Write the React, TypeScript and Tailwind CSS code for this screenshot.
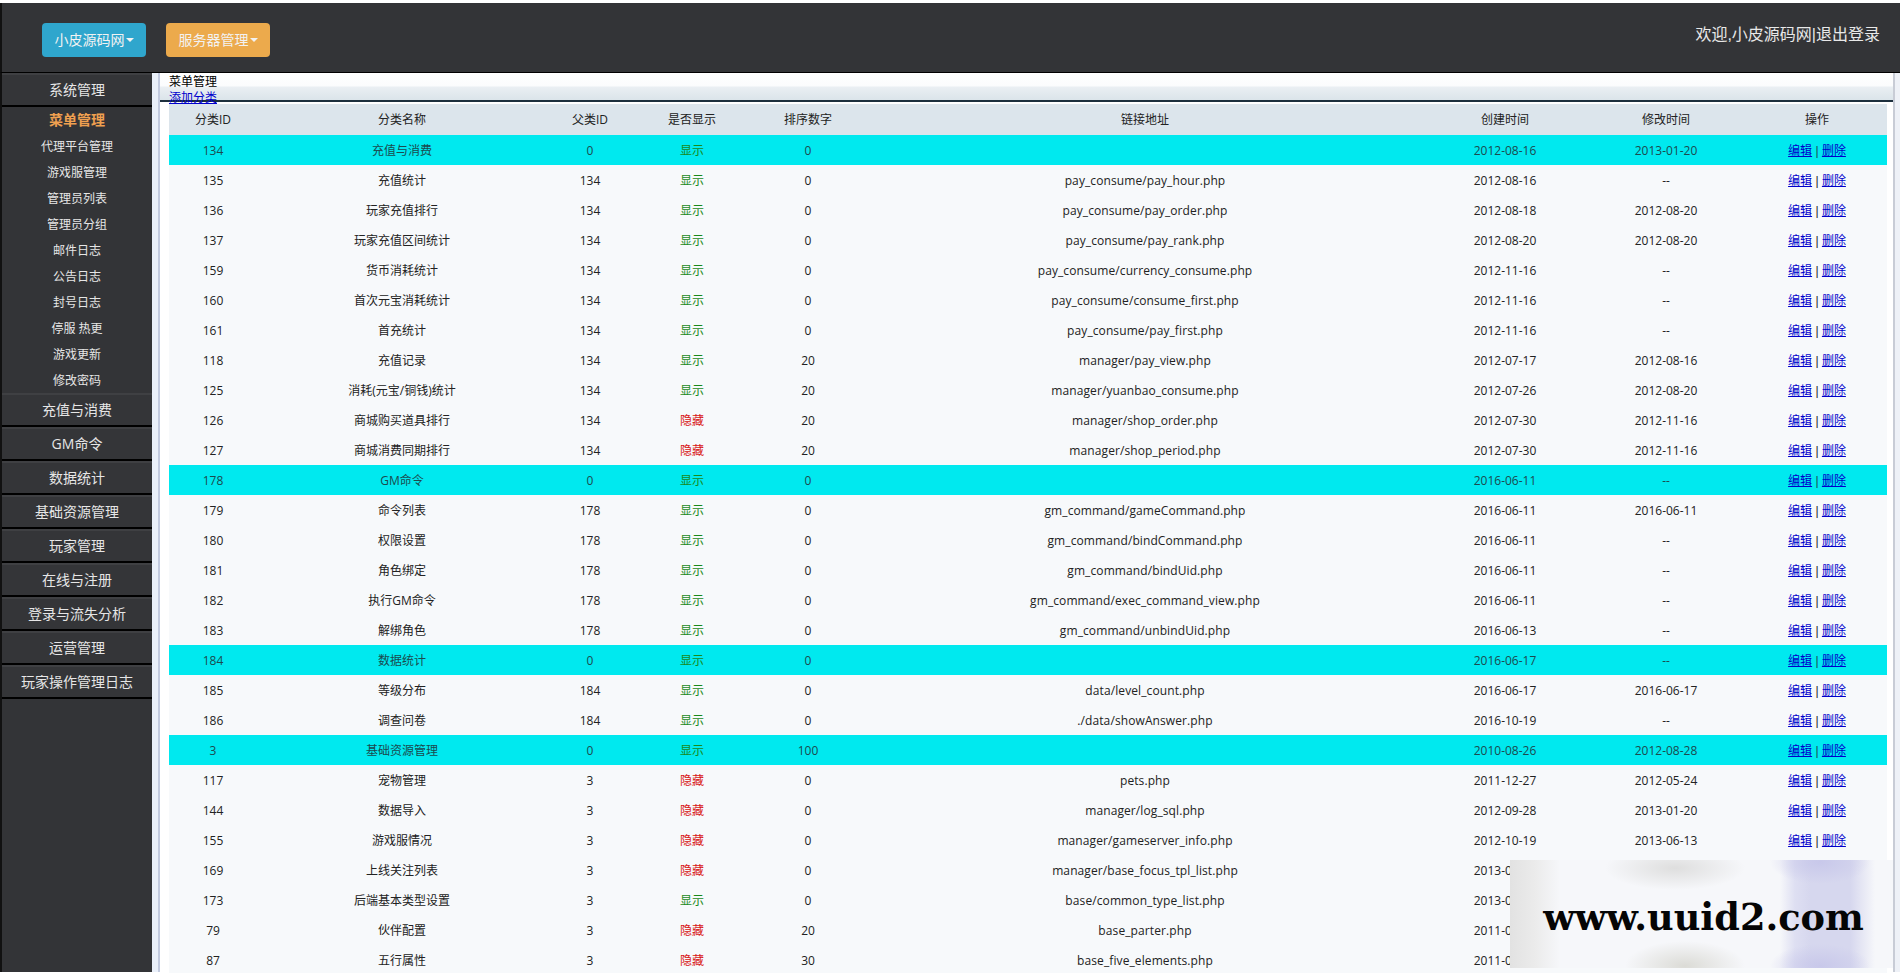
type Row = [number, string, number, boolean, number, string, string, string];

const rows: Row[] = [
  [134, "充值与消费", 0, true, 0, "", "2012-08-16", "2013-01-20"],
  [135, "充值统计", 134, true, 0, "pay_consume/pay_hour.php", "2012-08-16", "--"],
  [136, "玩家充值排行", 134, true, 0, "pay_consume/pay_order.php", "2012-08-18", "2012-08-20"],
  [137, "玩家充值区间统计", 134, true, 0, "pay_consume/pay_rank.php", "2012-08-20", "2012-08-20"],
  [159, "货币消耗统计", 134, true, 0, "pay_consume/currency_consume.php", "2012-11-16", "--"],
  [160, "首次元宝消耗统计", 134, true, 0, "pay_consume/consume_first.php", "2012-11-16", "--"],
  [161, "首充统计", 134, true, 0, "pay_consume/pay_first.php", "2012-11-16", "--"],
  [118, "充值记录", 134, true, 20, "manager/pay_view.php", "2012-07-17", "2012-08-16"],
  [125, "消耗(元宝/铜钱)统计", 134, true, 20, "manager/yuanbao_consume.php", "2012-07-26", "2012-08-20"],
  [126, "商城购买道具排行", 134, false, 20, "manager/shop_order.php", "2012-07-30", "2012-11-16"],
  [127, "商城消费同期排行", 134, false, 20, "manager/shop_period.php", "2012-07-30", "2012-11-16"],
  [178, "GM命令", 0, true, 0, "", "2016-06-11", "--"],
  [179, "命令列表", 178, true, 0, "gm_command/gameCommand.php", "2016-06-11", "2016-06-11"],
  [180, "权限设置", 178, true, 0, "gm_command/bindCommand.php", "2016-06-11", "--"],
  [181, "角色绑定", 178, true, 0, "gm_command/bindUid.php", "2016-06-11", "--"],
  [182, "执行GM命令", 178, true, 0, "gm_command/exec_command_view.php", "2016-06-11", "--"],
  [183, "解绑角色", 178, true, 0, "gm_command/unbindUid.php", "2016-06-13", "--"],
  [184, "数据统计", 0, true, 0, "", "2016-06-17", "--"],
  [185, "等级分布", 184, true, 0, "data/level_count.php", "2016-06-17", "2016-06-17"],
  [186, "调查问卷", 184, true, 0, "./data/showAnswer.php", "2016-10-19", "--"],
  [3, "基础资源管理", 0, true, 100, "", "2010-08-26", "2012-08-28"],
  [117, "宠物管理", 3, false, 0, "pets.php", "2011-12-27", "2012-05-24"],
  [144, "数据导入", 3, false, 0, "manager/log_sql.php", "2012-09-28", "2013-01-20"],
  [155, "游戏服情况", 3, false, 0, "manager/gameserver_info.php", "2012-10-19", "2013-06-13"],
  [169, "上线关注列表", 3, false, 0, "manager/base_focus_tpl_list.php", "2013-06-13", "--"],
  [173, "后端基本类型设置", 3, true, 0, "base/common_type_list.php", "2013-06-13", "--"],
  [79, "伙伴配置", 3, false, 20, "base_parter.php", "2011-08-08", "--"],
  [87, "五行属性", 3, false, 30, "base_five_elements.php", "2011-08-08", "--"],
];

const subMenu = ["代理平台管理", "游戏服管理", "管理员列表", "管理员分组", "邮件日志", "公告日志", "封号日志", "停服 热更", "游戏更新", "修改密码"];
const sections = ["充值与消费", "GM命令", "数据统计", "基础资源管理", "玩家管理", "在线与注册", "登录与流失分析", "运营管理", "玩家操作管理日志"];
const headers = ["分类ID", "分类名称", "父类ID", "是否显示", "排序数字", "链接地址", "创建时间", "修改时间", "操作"];

function NavButton({ label, color }: { label: string; color: string }) {
  return (
    <button className={`flex h-[34px] w-[104px] items-center justify-center rounded text-sm text-[#f2f2f2] ${color}`}>
      {label}
      <span className="ml-px h-0 w-0 border-x-4 border-t-4 border-x-transparent border-t-[#f2f2f2]" />
    </button>
  );
}

function Section({ label }: { label: string }) {
  return (
    <div className="flex h-[34px] items-center justify-center border-t-2 border-b-2 border-t-[#3f4043] border-b-black bg-[#343538] text-sm text-[#e6e6e6]">
      {label}
    </div>
  );
}

export default function App() {
  return (
    <div className="relative h-[973px] w-[1900px] overflow-hidden bg-white font-['Open_Sans','Noto_Sans_CJK_SC',sans-serif] text-xs">
      {/* top bar */}
      <div className="mt-[3px] flex h-[70px] items-center justify-between border-b-[1px] border-b-black border-l-2 border-l-[#111] bg-[#333437] pr-5">
        <div className="mt-[5px] ml-10 flex gap-5">
          <NavButton label="小皮源码网" color="bg-[#2fa6cd]" />
          <NavButton label="服务器管理" color="bg-[#ecaa4c]" />
        </div>
        <div className="mb-[6px] font-['Liberation_Sans','Noto_Sans_CJK_SC',sans-serif] text-base text-[#e8e8e8]">欢迎,小皮源码网|退出登录</div>
      </div>

      <div className="flex h-[899px]">
        {/* sidebar */}
        <div className="h-[899px] w-[152px] border-l-2 border-l-[#111] bg-[#333437]">
          <Section label="系统管理" />
          <div className="flex h-[26px] items-center justify-center text-sm font-bold text-[#f0a050]">菜单管理</div>
          {subMenu.map((item) => (
            <div key={item} className="flex h-[26px] items-center justify-center pt-[2px] text-xs text-[#e6e6e6]">
              {item}
            </div>
          ))}
          {sections.map((item) => (
            <Section key={item} label={item} />
          ))}
        </div>

        <div className="w-2 border-r-2 border-r-[#c3cbe0] bg-[#eaf0fa]" />

        {/* main content */}
        <div className="h-[899px] w-[1733px] bg-white text-[#222]">
          <div className="h-[29px] border-b-2 border-b-[#1d2f3d] bg-[linear-gradient(180deg,#ffffff_0%,#fbfcfd_48%,#eaeff3_52%,#dbe4ea_100%)] pt-px pl-[9px] leading-4 text-black">
            <div>菜单管理</div>
            <a href="#" className="relative text-[#0000cc] underline">添加分类</a>
          </div>
          <div className="pt-[2px] pl-[9px]">
            <table className="w-[1718px] table-fixed border-collapse text-center">
              <colgroup>
                <col className="w-[88px]" />
                <col className="w-[290px]" />
                <col className="w-[86px]" />
                <col className="w-[118px]" />
                <col className="w-[114px]" />
                <col className="w-[560px]" />
                <col className="w-[160px]" />
                <col className="w-[162px]" />
                <col className="w-[140px]" />
              </colgroup>
              <thead>
                <tr className="h-[31px] bg-[#dce5ec]">
                  {headers.map((h) => (
                    <th key={h} className="font-normal">{h}</th>
                  ))}
                </tr>
              </thead>
              <tbody className="[&_td]:pt-[2px]">
                {rows.map((r) => (
                  <tr key={r[0]} className={r[2] === 0 ? "h-[30px] bg-[#00e9ef] text-[#1c4a4e]" : "h-[30px] bg-[#f7f9fb]"}>
                    <td>{r[0]}</td>
                    <td>{r[1]}</td>
                    <td>{r[2]}</td>
                    <td className={r[3] ? "text-[#1a8a1a]" : "text-[#d81414]"}>{r[3] ? "显示" : "隐藏"}</td>
                    <td>{r[4]}</td>
                    <td className="tracking-[0.1px]">{r[5]}</td>
                    <td>{r[6]}</td>
                    <td>{r[7]}</td>
                    <td>
                      <a href="#" className="text-[#0000cc] underline">编辑</a>
                      <span className="font-['Liberation_Sans',sans-serif]"> | </span>
                      <a href="#" className="text-[#0000cc] underline">删除</a>
                    </td>
                  </tr>
                ))}
              </tbody>
            </table>
          </div>
        </div>

        <div className="h-[899px] w-[7px] border-l-2 border-l-[#c8ccd6] bg-[#eef1f7]" />
      </div>

      {/* watermark pasted over the corner */}
      <div className="absolute top-[860px] left-[1510px] flex h-[108px] w-[383px] items-center justify-center bg-[radial-gradient(ellipse_70px_22px_at_165px_8px,#dedede,transparent),radial-gradient(ellipse_60px_25px_at_175px_106px,#dbdbd6,transparent),radial-gradient(ellipse_50px_22px_at_310px_2px,#c8c8ea,transparent),radial-gradient(ellipse_50px_22px_at_310px_106px,#c8c8ea,transparent),linear-gradient(90deg,#e2e2e2_0px,#ebebeb_25px,#f6f7fa_50px,#f6f7fa_270px,#dedff2_285px,#d6d7ee_300px,#d6d7ee_340px,#f6f7fa_365px)] pt-[8px] pl-[4px] font-['DejaVu_Serif',serif] text-[36.7px] leading-none font-bold text-[#050505]">
        www.uuid2.com
      </div>
    </div>
  );
}
